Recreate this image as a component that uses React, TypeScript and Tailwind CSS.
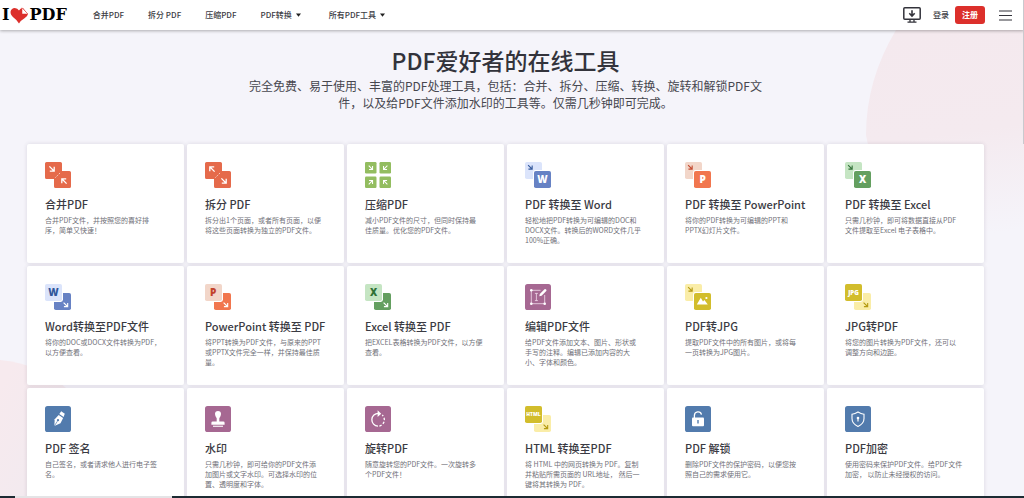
import type { ReactNode } from "react";

type Dir = "se" | "nw" | "sw" | "ne";

const rotation: Record<Dir, number> = { se: 0, sw: 90, nw: 180, ne: 270 };

function Arrow({ x, y, dir, color = "#fff", size = 1 }: { x: number; y: number; dir: Dir; color?: string; size?: number }) {
  return (
    <g transform={`translate(${x} ${y}) rotate(${rotation[dir]}) scale(${size})`} fill="none" stroke={color} strokeWidth={1.3}>
      <path d="M-2.6 -2.6L2 2M2.2 -2.2V2.2H-2.2" />
    </g>
  );
}

function Icon({ children }: { children: ReactNode }) {
  return (
    <svg className="block size-[26px]" viewBox="0 0 26 26" aria-hidden="true">
      {children}
    </svg>
  );
}

function Letter({ x, y, color, size = 10, children }: { x: number; y: number; color: string; size?: number; children: string }) {
  return (
    <text x={x} y={y} fill={color} fontSize={size} fontWeight="800" textAnchor="middle" fontFamily="Open Sans, sans-serif">
      {children}
    </text>
  );
}

function PairIcon({ outward = false }: { outward?: boolean }) {
  return (
    <Icon>
      <path fill="#e56a4b" d="M1.6 0H15.4A1.6 1.6 0 0 1 17 1.6V9H24.4A1.6 1.6 0 0 1 26 10.6V24.4A1.6 1.6 0 0 1 24.4 26H10.6A1.6 1.6 0 0 1 9 24.4V17H1.6A1.6 1.6 0 0 1 0 15.4V1.6A1.6 1.6 0 0 1 1.6 0Z" />
      <path d="M10.5 15.5L15.5 10.5" stroke="#fff" strokeWidth="0.8" strokeDasharray="1.2 1.4" />
      <Arrow x={7} y={7} dir={outward ? "nw" : "se"} />
      <Arrow x={19} y={19} dir={outward ? "se" : "nw"} />
    </Icon>
  );
}

function FromPdfIcon({ light, dark, arrow, children }: { light: string; dark: string; arrow: string; children: ReactNode }) {
  return (
    <Icon>
      <rect width="17" height="17" rx="1.8" fill={light} />
      <rect x="8" y="8" width="19" height="19" rx="2.4" fill="#fff" />
      <rect x="9" y="9" width="17" height="17" rx="1.8" fill={dark} />
      <Arrow x={5.3} y={5.3} dir="se" color={arrow} size={0.85} />
      {children}
    </Icon>
  );
}

function ToPdfIcon({ front, back, arrow = "#fff", children }: { front: string; back: string; arrow?: string; children: ReactNode }) {
  return (
    <Icon>
      <rect x="9" y="9" width="17" height="17" rx="1.8" fill={back} />
      <rect x="-1" y="-1" width="19" height="19" rx="2.4" fill="#fff" />
      <rect width="17" height="17" rx="1.8" fill={front} />
      <Arrow x={20.8} y={20.8} dir="se" color={arrow} size={0.85} />
      {children}
    </Icon>
  );
}

function CompressIcon() {
  const tiles: { x: number; y: number; dir: Dir }[] = [
    { x: 0, y: 0, dir: "se" },
    { x: 14.5, y: 0, dir: "sw" },
    { x: 0, y: 14.5, dir: "ne" },
    { x: 14.5, y: 14.5, dir: "nw" },
  ];
  return (
    <Icon>
      {tiles.map((t) => (
        <g key={t.dir}>
          <rect x={t.x} y={t.y} width="11.5" height="11.5" rx="1.2" fill="#93bd60" />
          <Arrow x={t.x + 5.8} y={t.y + 5.8} dir={t.dir} size={0.8} />
        </g>
      ))}
    </Icon>
  );
}

function TileIcon({ color, children }: { color: string; children: ReactNode }) {
  return (
    <Icon>
      <rect width="26" height="26" rx="2.6" fill={color} />
      {children}
    </Icon>
  );
}

const tools: { title: string; text: string; icon: ReactNode }[] = [
  { title: "合并PDF", text: "合并PDF文件，并按照您的喜好排\n序，简单又快速！", icon: <PairIcon /> },
  { title: "拆分 PDF", text: "拆分出1个页面，或者所有页面，以便\n将这些页面转换为独立的PDF文件。", icon: <PairIcon outward /> },
  { title: "压缩PDF", text: "减小PDF文件的尺寸，但同时保持最\n佳质量。优化您的PDF文件。", icon: <CompressIcon /> },
  {
    title: "PDF 转换至 Word",
    text: "轻松地把PDF转换为可编辑的DOC和\nDOCX文件。转换后的WORD文件几乎\n100%正确。",
    icon: <FromPdfIcon light="#dbe4fb" dark="#6782c4" arrow="#365a9d"><Letter x={17.5} y={21.4} color="#fff">W</Letter></FromPdfIcon>,
  },
  {
    title: "PDF 转换至 PowerPoint",
    text: "将你的PDF转换为可编辑的PPT和\nPPTX幻灯片文件。",
    icon: <FromPdfIcon light="#f2d6c9" dark="#f1764e" arrow="#c34a30"><Letter x={17.7} y={21.4} color="#fff">P</Letter></FromPdfIcon>,
  },
  {
    title: "PDF 转换至 Excel",
    text: "只需几秒钟，即可将数据直接从PDF\n文件提取至Excel 电子表格中。",
    icon: <FromPdfIcon light="#c5e5c3" dark="#649f60" arrow="#34733a"><Letter x={17.5} y={21.4} color="#fff">X</Letter></FromPdfIcon>,
  },
  {
    title: "Word转换至PDF文件",
    text: "将你的DOC或DOCX文件转换为PDF，\n以方便查看。",
    icon: <ToPdfIcon front="#dbe4fb" back="#6782c4"><Letter x={8.5} y={12} color="#2f559a">W</Letter></ToPdfIcon>,
  },
  {
    title: "PowerPoint 转换至 PDF",
    text: "将PPT转换为PDF文件，与原来的PPT\n或PPTX文件完全一样，并保持最佳质\n量。",
    icon: <ToPdfIcon front="#f2d6c9" back="#f1764e"><Letter x={8.2} y={12} color="#c2432c">P</Letter></ToPdfIcon>,
  },
  {
    title: "Excel 转换至 PDF",
    text: "把EXCEL表格转换为PDF文件，以方便\n查看。",
    icon: <ToPdfIcon front="#c5e5c3" back="#649f60"><Letter x={8.5} y={12} color="#2f7036">X</Letter></ToPdfIcon>,
  },
  {
    title: "编辑PDF文件",
    text: "给PDF文件添加文本、图片、形状或\n手写的注释。编辑已添加内容的大\n小、字体和颜色。",
    icon: (
      <TileIcon color="#a66892">
        <g stroke="#f3dcec" strokeWidth="0.8" fill="none">
          <path d="M15.5 6.3H6.3V19.7H19.7V11M11.4 9.4V16.6M9.9 9.4H12.9M9.9 16.6H12.9" />
        </g>
        <g fill="#fff">
          <circle cx="6.3" cy="6.3" r="1.3" />
          <circle cx="6.3" cy="19.7" r="1.3" />
          <circle cx="19.7" cy="19.7" r="1.3" />
          <path d="M14.3 12.2L14.8 9.9L19.5 5.2Q20.3 4.6 21.1 5.4T21.3 7L16.6 11.7Z" />
        </g>
      </TileIcon>
    ),
  },
  {
    title: "PDF转JPG",
    text: "提取PDF文件中的所有图片，或将每\n一页转换为JPG图片。",
    icon: (
      <FromPdfIcon light="#faeda8" dark="#d2bd2c" arrow="#b59b13">
        <path d="M11.8 20.4L15.8 13.8L18 17.4L19.4 15.9L22.8 20.4Z" fill="#fff" />
        <circle cx="21.4" cy="14" r="1.1" fill="#fff" />
      </FromPdfIcon>
    ),
  },
  {
    title: "JPG转PDF",
    text: "将您的图片转换为PDF文件，还可以\n调整方向和边距。",
    icon: <ToPdfIcon front="#d2bd2c" back="#faeda8" arrow="#b59b13"><Letter x={8.5} y={10.7} color="#fff" size={6.2}>JPG</Letter></ToPdfIcon>,
  },
  {
    title: "PDF 签名",
    text: "自己签名，或者请求他人进行电子签\n名。",
    icon: (
      <TileIcon color="#527bad">
        <path d="M9.3 20L9.7 13.2L13.7 9L18.1 12L15.5 17.3Z" fill="#fff" />
        <path d="M14.3 7.9L16.2 5.3L19.8 7.8L18.6 11Z" fill="#fff" />
        <path d="M9.3 20L12.4 15.2" stroke="#527bad" strokeWidth="0.7" />
        <circle cx="13" cy="14.2" r="1.1" fill="#527bad" />
      </TileIcon>
    ),
  },
  {
    title: "水印",
    text: "只需几秒钟，即可给你的PDF文件添\n加图片或文字水印。可选择水印的位\n置、透明度和字体。",
    icon: (
      <TileIcon color="#a66892">
        <path d="M11.7 15.4V12.3Q10 9.8 10 7.9A3 3 0 0 1 16 7.9Q16 9.8 14.3 12.3V15.4H18.3Q19.6 15.4 19.6 16.8V18.7H6.4V16.8Q6.4 15.4 7.7 15.4Z" fill="#fff" />
        <path d="M8 19.7H18V20.8H8Z" fill="#fff" />
      </TileIcon>
    ),
  },
  {
    title: "旋转PDF",
    text: "随意旋转您的PDF文件。一次旋转多\n个PDF文件！",
    icon: (
      <TileIcon color="#a66892">
        <path d="M13.5 7.4A6.4 6.4 0 1 0 13 20.2" fill="none" stroke="#fff" strokeWidth="1.3" />
        <path d="M13 20.2A6.4 6.4 0 0 0 17.2 9" fill="none" stroke="#fff" strokeWidth="1.3" strokeDasharray="2.4 1.7" strokeDashoffset="-1.4" />
        <path d="M12.6 4.3L16.2 7.7L12.6 11.1Z" fill="#fff" />
      </TileIcon>
    ),
  },
  {
    title: "HTML 转换至PDF",
    text: "将 HTML 中的网页转换为 PDF。复制\n并粘贴所需页面的 URL地址， 然后一\n键将其转换为 PDF。",
    icon: <ToPdfIcon front="#d2bd2c" back="#faeda8" arrow="#b59b13"><Letter x={8.5} y={10.3} color="#fff" size={5}>HTML</Letter></ToPdfIcon>,
  },
  {
    title: "PDF 解锁",
    text: "删除PDF文件的保护密码，以便您按\n照自己的需求使用它。",
    icon: (
      <TileIcon color="#527bad">
        <path d="M9.4 12V9.3A3.6 3.6 0 0 1 16.5 8.6" fill="none" stroke="#fff" strokeWidth="1.3" />
        <rect x="7" y="11.5" width="12" height="8.8" rx="1" fill="#fff" />
        <path d="M13 14V17.6" stroke="#527bad" strokeWidth="1.4" />
      </TileIcon>
    ),
  },
  {
    title: "PDF加密",
    text: "使用密码来保护PDF文件。给PDF文件\n加密， 以防止未经授权的访问。",
    icon: (
      <TileIcon color="#527bad">
        <path d="M13 6Q16 8 19 8.2V12.5Q19 17.8 13 20.4Q7 17.8 7 12.5V8.2Q10 8 13 6Z" fill="none" stroke="#fff" strokeWidth="1.1" />
        <circle cx="13" cy="12" r="1.3" fill="#fff" />
        <path d="M13 12V15.6" stroke="#fff" strokeWidth="1.2" />
      </TileIcon>
    ),
  },
];

function Caret() {
  return (
    <svg className="h-[4px] w-[5px]" viewBox="0 0 5 4" aria-hidden="true">
      <path d="M0 0.4H5L2.5 3.8Z" fill="#222" />
    </svg>
  );
}

function Header() {
  return (
    <header className="relative z-10 flex h-[30px] shrink-0 items-center bg-white pl-[2px] pr-3 text-[8px] leading-3 font-medium text-[#3c3c44] shadow-[0_1px_3px_rgba(0,0,0,0.3)]">
      <a href="#" aria-label="I love PDF" className="flex items-center gap-px font-['DejaVu_Serif',serif] text-[16px] leading-5 font-bold text-black">
        <span>I</span>
        <svg className="h-[17px] w-[18px]" viewBox="0 0 18 17" aria-hidden="true">
          <path d="M9 16.5Q7 13 3.5 10.5Q0 7.6 0.6 4.3Q1.4 1 4.8 0.9Q7.6 0.9 9 3.6Q10.4 0.9 13 1.1L17.8 7Q17.8 9.5 14.5 11.2Q10.4 13.6 9 16.5Z" fill="#dc2f2b" />
          <path d="M12 0.8L17.9 7H12Z" fill="#fff" stroke="#dc2f2b" strokeWidth="0.5" />
        </svg>
        <span>PDF</span>
      </a>
      <nav className="ml-[26px] flex items-center gap-6" aria-label="主导航">
        <a href="#">合并PDF</a>
        <a href="#">拆分 PDF</a>
        <a href="#">压缩PDF</a>
        <button type="button" className="mr-1 flex items-center gap-1">PDF转换<Caret /></button>
        <button type="button" className="flex items-center gap-1">所有PDF工具<Caret /></button>
      </nav>
      <div className="ml-auto flex items-center">
        <button type="button" aria-label="下载桌面版">
          <svg className="block h-4 w-[18px]" viewBox="0 0 18 16" fill="none" stroke="#33333b" aria-hidden="true">
            <rect x="0.8" y="0.8" width="16.4" height="11.4" rx="1" strokeWidth="1.5" />
            <path d="M9 3.2V8.4M6.3 6.3L9 9L11.7 6.3" strokeWidth="1.6" />
            <path d="M7 12.5V15M11 12.5V15M4.5 15.1H13.5" strokeWidth="1.3" />
          </svg>
        </button>
        <a href="#" className="ml-3">登录</a>
        <a href="#" className="ml-[6px] rounded-[3px] bg-[#dc2f2b] px-[7px] py-[3px] font-bold text-white">注册</a>
        <button type="button" aria-label="菜单" className="ml-[14px]">
          <svg className="block h-[11px] w-[13px]" viewBox="0 0 13 11" stroke="#33333b" strokeWidth="1.2" aria-hidden="true">
            <path d="M0 1H13M0 5.5H13M0 10H13" />
          </svg>
        </button>
      </div>
    </header>
  );
}

function Backdrop() {
  return (
    <svg className="absolute inset-0 size-full" viewBox="0 0 1024 466" preserveAspectRatio="none" aria-hidden="true">
      <defs>
        <linearGradient id="rose" x1="0.4" y1="0" x2="0.5" y2="1">
          <stop offset="0" stopColor="#f4e9ee" />
          <stop offset="0.5" stopColor="#f4eaef" />
          <stop offset="1" stopColor="#f5f4fa" />
        </linearGradient>
        <linearGradient id="blush" x1="0" y1="0.2" x2="1" y2="1">
          <stop offset="0" stopColor="#f7eaee" />
          <stop offset="1" stopColor="#efeaf0" />
        </linearGradient>
      </defs>
      <path d="M896 0H1024V210L940 190Q875 160 866 105Q866 50 896 0Z" fill="url(#rose)" />
      <path d="M0 330Q40 334 66 358Q90 390 96 466H0Z" fill="url(#blush)" />
    </svg>
  );
}

export default function App() {
  return (
    <div className="relative flex h-screen flex-col overflow-hidden bg-[#f5f4fa] font-['Noto_Sans_CJK_SC',sans-serif]" lang="zh-CN">
      <Header />
      <main className="relative min-h-0 flex-1 overflow-hidden">
        <Backdrop />
        <div className="relative pr-10 pl-[27px]">
          <section className="flex flex-col items-center pt-[14px] text-center">
            <h1 className="text-[23px] leading-8 font-medium text-[#33333b]">PDF爱好者的在线工具</h1>
            <p className="mt-px w-[520px] text-[12px] leading-[17px] text-[#47474f]">
              完全免费、易于使用、丰富的PDF处理工具，包括：合并、拆分、压缩、转换、旋转和解锁PDF文件，以及给PDF文件添加水印的工具等。仅需几秒钟即可完成。
            </p>
          </section>
          <section className="mt-[33px] grid grid-cols-6 gap-[3px]" aria-label="PDF工具">
            {tools.map((tool) => (
              <a key={tool.title} href="#" className="block min-h-[119px] rounded-[2px] bg-white pt-[18px] pr-2 pb-4 pl-[18px] shadow-[0_0_4px_rgba(60,50,80,0.14)]">
                {tool.icon}
                <h2 className="mt-2 text-[11px] leading-4 font-medium whitespace-nowrap text-[#3a3a42]">{tool.title}</h2>
                <p className="mt-[3px] text-[7px] leading-[10px] whitespace-pre text-[#707078]">{tool.text}</p>
              </a>
            ))}
          </section>
        </div>
      </main>
      <div className="flex h-[2px] shrink-0 bg-[#1c2b33]">
        <div className="ml-[15px] w-[157px] bg-[#e4e4e6]" />
      </div>
      <div className="absolute top-0 right-0 z-20 h-36 w-px bg-[#c9c9ce]" />
    </div>
  );
}
